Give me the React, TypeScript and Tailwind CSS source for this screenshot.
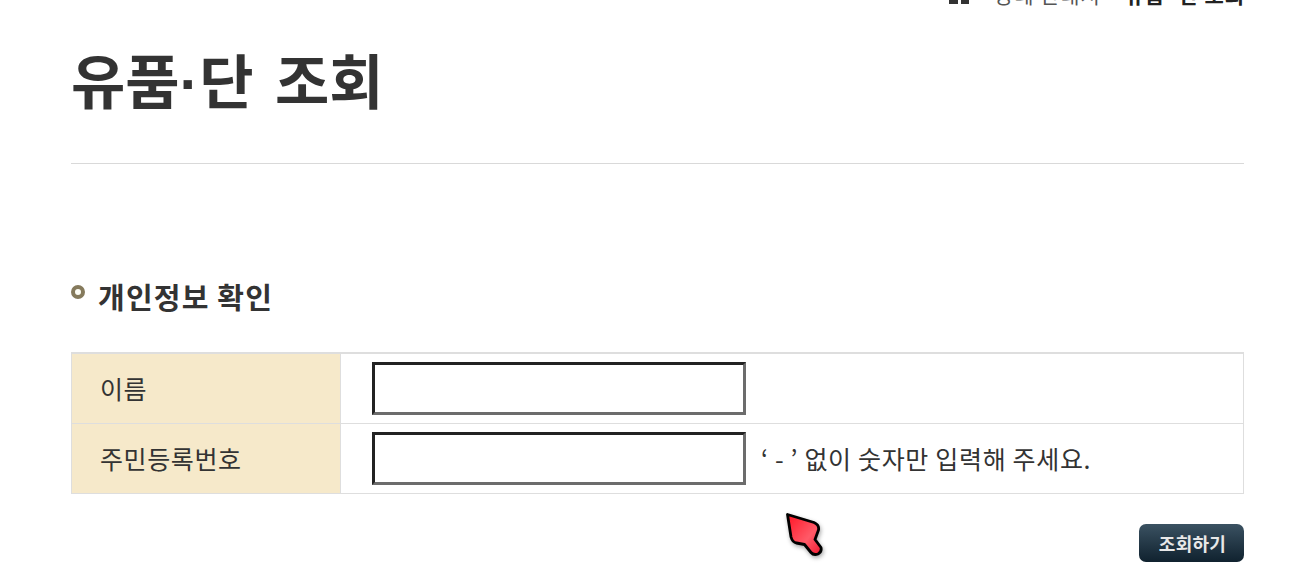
const font = "font-['Noto_Sans_CJK_KR','Noto_Sans',sans-serif]";

function HomeIcon() {
  return (
    <svg width="20" height="18" viewBox="0 0 20 18" className="shrink-0 -mt-[14px]" aria-hidden>
      <path d="M0 9 10 0l10 9v9H0z" fill="#333" />
      <rect x="9" y="9" width="3" height="9" fill="#fff" />
    </svg>
  );
}

function Cursor() {
  return (
    <svg
      width="48"
      height="56"
      viewBox="0 0 48 56"
      className="absolute left-[780px] top-[505px] drop-shadow-[1px_2px_2px_rgba(0,0,0,0.35)]"
      aria-hidden
    >
      <defs>
        <linearGradient id="cursorFill" x1="0" y1="0" x2="1" y2="1">
          <stop offset="0" stopColor="#ff1525" />
          <stop offset="0.6" stopColor="#ff5a68" />
          <stop offset="1" stopColor="#f01830" />
        </linearGradient>
      </defs>
      <path
        d="M7.5 9.5 L34 17.5 Q39.5 20 38.5 25 L35 34.5 L41 42.5 Q42 47 38 49 Q33.5 50.5 31 47.5 L24.5 39.5 L16.5 38 Q12.5 37.5 11 32 Z"
        fill="url(#cursorFill)"
        stroke="#000"
        strokeWidth="2.8"
        strokeLinejoin="round"
      />
    </svg>
  );
}

function Row({ label, hint, last }: { label: string; hint?: string; last?: boolean }) {
  return (
    <div className={`flex ${last ? "h-[69px]" : "h-[70px] border-b border-[#dedede]"}`}>
      <div className="flex w-[269px] items-center border-r border-[#dedede] bg-[#f6e9ca] pt-[1px] pl-[28px] text-[25px] tracking-[0.6px] text-[#333]">
        {label}
      </div>
      <div className="flex flex-1 items-center pl-[31px]">
        <input
          type="text"
          className="h-[53px] w-[374px] border-[3px] border-t-[#222] border-r-[#6c6c6c] border-b-[#6c6c6c] border-l-[#222] bg-white"
        />
        {hint && <span className="mt-[1px] ml-[15px] text-[25px] tracking-[0.67px] text-[#333]">{hint}</span>}
      </div>
    </div>
  );
}

export default function App() {
  return (
    <div className={`relative h-[587px] overflow-hidden bg-white ${font}`}>
      <div className="flex h-[5px] items-start justify-end gap-[6px] pr-[59px] text-[21px] leading-none tracking-[0.9px] text-[#555]">
        <HomeIcon />
        <span className="-mt-[16px] ml-[1px]">&gt; 장례 안내서 &gt;</span>
        <span className="-mt-[16px] font-bold text-[#222]">유품·단 조회</span>
      </div>

      <div className="mx-[71px] mr-[60px]">
        <h1 className="mt-[20px] h-[139px] border-b border-[#d9d9d9] text-[59px] leading-[108px] font-bold tracking-[0px] [word-spacing:8px] text-[#333]">
          유품<span className="font-['Liberation_Sans',sans-serif]">·</span>단 조회
        </h1>

        <h2 className="mt-[113px] flex h-[40px] items-center text-[29px] font-bold tracking-[1.2px] text-[#333]">
          <span className="mr-[13px] -mt-[10px] h-[14px] w-[14px] rounded-full border-[4px] border-[#857a5c] bg-[#fdfdf5]" />
          개인정보 확인
        </h2>

        <div className="mt-[35px] border border-t-2 border-[#dedede]">
          <Row label="이름" />
          <Row label="주민등록번호" hint="‘ - ’ 없이 숫자만 입력해 주세요." last />
        </div>

        <div className="mt-[30px] flex justify-end">
          <button
            type="button"
            className="h-[38px] w-[105px] rounded-[7px] bg-gradient-to-b from-[#3b5262] to-[#10222f] pl-[2px] text-[18px] font-bold tracking-[0.3px] text-[#e8e8e8]"
          >
            조회하기
          </button>
        </div>
      </div>

      <Cursor />
    </div>
  );
}
